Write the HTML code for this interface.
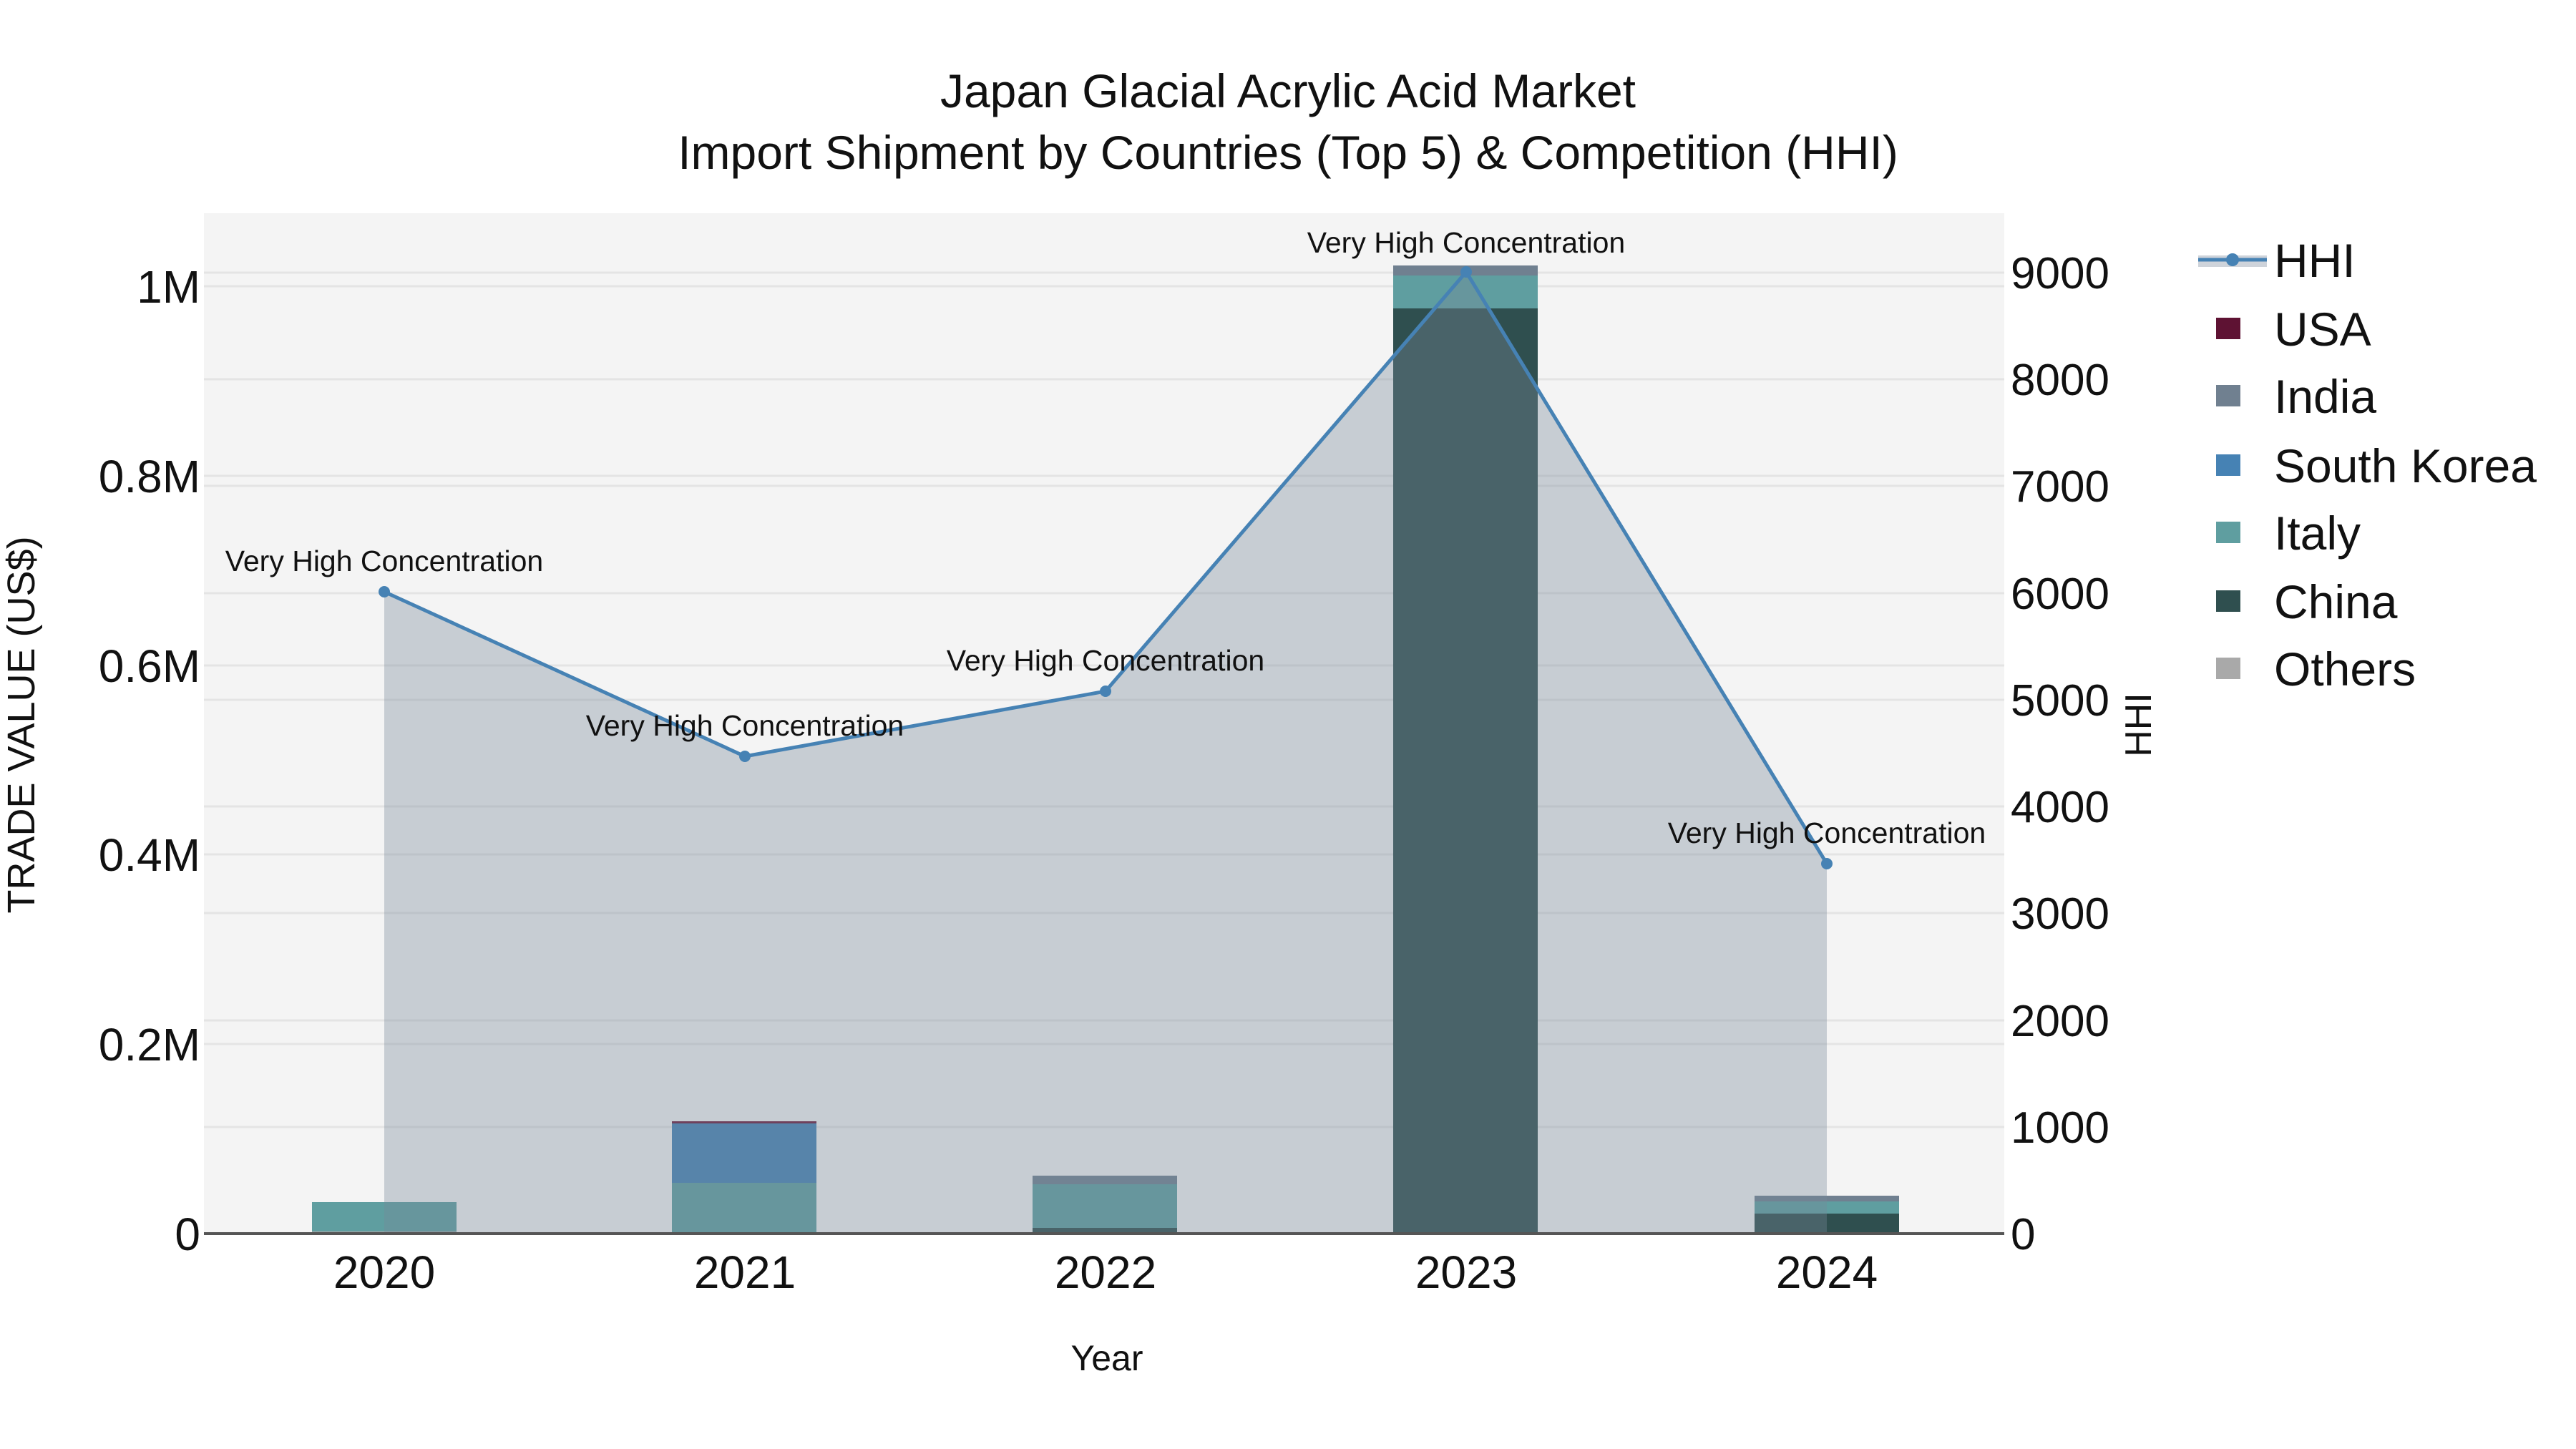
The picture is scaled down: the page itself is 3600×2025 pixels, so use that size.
<!DOCTYPE html>
<html><head><meta charset="utf-8"><style>
html,body{margin:0;padding:0;background:#fff}
svg{display:block}
text{font-family:"Liberation Sans",Arial,sans-serif;fill:#111}
</style></head><body>
<svg width="3600" height="2025" viewBox="0 0 3600 2025" xmlns="http://www.w3.org/2000/svg">
<rect x="285" y="298" width="2516" height="1426" fill="#f4f4f4"/>
<g stroke="#e4e4e4" stroke-width="3">
<line x1="285" x2="2801" y1="1459" y2="1459"/>
<line x1="285" x2="2801" y1="1194" y2="1194"/>
<line x1="285" x2="2801" y1="930" y2="930"/>
<line x1="285" x2="2801" y1="665" y2="665"/>
<line x1="285" x2="2801" y1="400" y2="400"/>
<line x1="285" x2="2801" y1="1575" y2="1575"/>
<line x1="285" x2="2801" y1="1426" y2="1426"/>
<line x1="285" x2="2801" y1="1276" y2="1276"/>
<line x1="285" x2="2801" y1="1127" y2="1127"/>
<line x1="285" x2="2801" y1="978" y2="978"/>
<line x1="285" x2="2801" y1="829" y2="829"/>
<line x1="285" x2="2801" y1="679" y2="679"/>
<line x1="285" x2="2801" y1="530" y2="530"/>
<line x1="285" x2="2801" y1="381" y2="381"/>
</g>
<rect x="436" y="1680" width="202" height="41" fill="#5f9ea0"/>
<rect x="436" y="1721" width="202" height="3" fill="#a9a9a9"/>
<rect x="939" y="1567" width="202" height="3" fill="#6b1a3a"/>
<rect x="939" y="1570" width="202" height="83" fill="#4682b4"/>
<rect x="939" y="1653" width="202" height="71" fill="#5f9ea0"/>
<rect x="1443" y="1643" width="202" height="12" fill="#708090"/>
<rect x="1443" y="1655" width="202" height="61" fill="#5f9ea0"/>
<rect x="1443" y="1716" width="202" height="8" fill="#2f4f4f"/>
<rect x="1947" y="371" width="202" height="14" fill="#708090"/>
<rect x="1947" y="385" width="202" height="46" fill="#5f9ea0"/>
<rect x="1947" y="431" width="202" height="1293" fill="#2f4f4f"/>
<rect x="2452" y="1671" width="202" height="8" fill="#708090"/>
<rect x="2452" y="1679" width="202" height="17" fill="#5f9ea0"/>
<rect x="2452" y="1696" width="202" height="28" fill="#2f4f4f"/>
<polygon points="537,1724 537,827 1041,1057 1545,966 2049,380 2553,1207 2553,1724" fill="rgba(119,136,153,0.36)"/>
<line x1="285" x2="2801" y1="1724" y2="1724" stroke="#555" stroke-width="4"/>
<polyline points="537,827 1041,1057 1545,966 2049,380 2553,1207" fill="none" stroke="#4682b4" stroke-width="5"/>
<g fill="#4682b4">
<circle cx="537" cy="827" r="8"/><circle cx="1041" cy="1057" r="8"/><circle cx="1545" cy="966" r="8"/><circle cx="2049" cy="380" r="8"/><circle cx="2553" cy="1207" r="8"/>
</g>
<g font-size="41" text-anchor="middle">
<text x="537" y="798">Very High Concentration</text>
<text x="1041" y="1028">Very High Concentration</text>
<text x="1545" y="937">Very High Concentration</text>
<text x="2049" y="353">Very High Concentration</text>
<text x="2553" y="1178">Very High Concentration</text>
</g>
<g text-anchor="middle" font-size="66">
<text x="1800" y="150">Japan Glacial Acrylic Acid Market</text>
<text x="1800" y="236">Import Shipment by Countries (Top 5) &amp; Competition (HHI)</text>
</g>
<g font-size="64" text-anchor="end">
<text x="280" y="1747">0</text>
<text x="280" y="1482">0.2M</text>
<text x="280" y="1217">0.4M</text>
<text x="280" y="953">0.6M</text>
<text x="280" y="688">0.8M</text>
<text x="280" y="423">1M</text>
</g>
<g font-size="62">
<text x="2810" y="1746">0</text>
<text x="2810" y="1597">1000</text>
<text x="2810" y="1448">2000</text>
<text x="2810" y="1298">3000</text>
<text x="2810" y="1149">4000</text>
<text x="2810" y="1000">5000</text>
<text x="2810" y="851">6000</text>
<text x="2810" y="701">7000</text>
<text x="2810" y="552">8000</text>
<text x="2810" y="403">9000</text>
</g>
<g font-size="64" text-anchor="middle">
<text x="537" y="1800">2020</text>
<text x="1041" y="1800">2021</text>
<text x="1545" y="1800">2022</text>
<text x="2049" y="1800">2023</text>
<text x="2553" y="1800">2024</text>
</g>
<text x="1547" y="1915" font-size="50" text-anchor="middle">Year</text>
<text transform="translate(48,1013) rotate(-90)" font-size="54" text-anchor="middle">TRADE VALUE (US$)</text>
<text transform="translate(3006,1013) rotate(-90)" font-size="52" text-anchor="middle">HHI</text>
<rect x="3072" y="357" width="96" height="16" fill="#ced3da"/>
<line x1="3072" x2="3168" y1="363" y2="363" stroke="#4682b4" stroke-width="5"/>
<circle cx="3120" cy="363" r="9" fill="#4682b4"/>
<rect x="3097" y="444" width="34" height="30" fill="#5e1233"/>
<rect x="3097" y="538" width="34" height="30" fill="#708090"/>
<rect x="3097" y="635" width="34" height="30" fill="#4682b4"/>
<rect x="3097" y="729" width="34" height="30" fill="#5f9ea0"/>
<rect x="3097" y="825" width="34" height="30" fill="#2f4f4f"/>
<rect x="3097" y="919" width="34" height="30" fill="#a9a9a9"/>
<g font-size="66">
<text x="3178" y="387">HHI</text>
<text x="3178" y="483">USA</text>
<text x="3178" y="577">India</text>
<text x="3178" y="674">South Korea</text>
<text x="3178" y="768">Italy</text>
<text x="3178" y="864">China</text>
<text x="3178" y="958">Others</text>
</g>
</svg>
</body></html>
